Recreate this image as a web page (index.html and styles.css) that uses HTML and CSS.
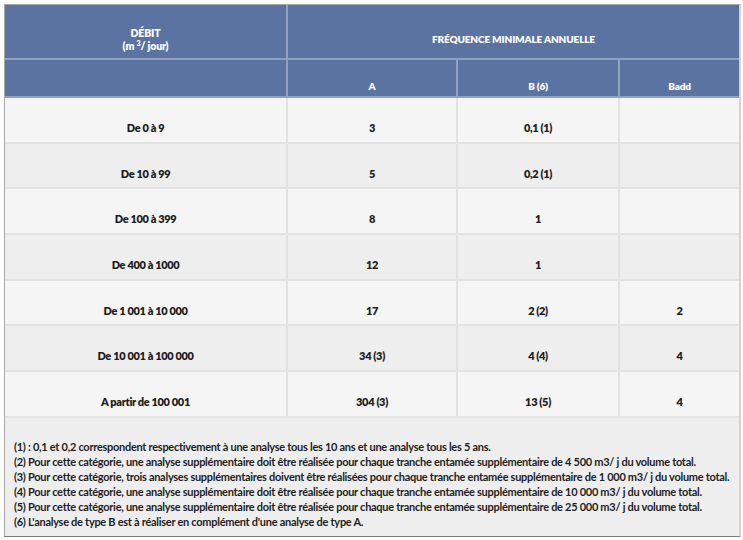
FILE: index.html
```html
<!DOCTYPE html>
<html lang="fr">
<head>
<meta charset="utf-8">
<link rel="stylesheet" href="styles.css">
</head>
<body>
<div class="frame">
  <table class="freq">
    <colgroup>
      <col class="c1"><col class="c2"><col class="c3"><col class="c4">
    </colgroup>
    <thead>
      <tr class="h1">
        <th class="debit">DÉBIT<br>(m <sup>3</sup>/ jour)</th>
        <th colspan="3">FRÉQUENCE MINIMALE ANNUELLE</th>
      </tr>
      <tr class="h2">
        <th></th>
        <th>A</th>
        <th>B (6)</th>
        <th>Badd</th>
      </tr>
    </thead>
    <tbody>
      <tr><td>De 0 à 9</td><td>3</td><td>0,1 (1)</td><td></td></tr>
      <tr><td>De 10 à 99</td><td>5</td><td>0,2 (1)</td><td></td></tr>
      <tr><td>De 100 à 399</td><td>8</td><td>1</td><td></td></tr>
      <tr><td>De 400 à 1000</td><td>12</td><td>1</td><td></td></tr>
      <tr><td>De 1 001 à 10 000</td><td>17</td><td>2 (2)</td><td>2</td></tr>
      <tr><td>De 10 001 à 100 000</td><td>34 (3)</td><td>4 (4)</td><td>4</td></tr>
      <tr><td>A partir de 100 001</td><td>304 (3)</td><td>13 (5)</td><td>4</td></tr>
    </tbody>
  </table>
  <div class="notes">
    <p>(1) : 0,1 et 0,2 correspondent respectivement à une analyse tous les 10 ans et une analyse tous les 5 ans.</p>
    <p>(2) Pour cette catégorie, une analyse supplémentaire doit être réalisée pour chaque tranche entamée supplémentaire de 4 500 m3/ j du volume total.</p>
    <p>(3) Pour cette catégorie, trois analyses supplémentaires doivent être réalisées pour chaque tranche entamée supplémentaire de 1 000 m3/ j du volume total.</p>
    <p>(4) Pour cette catégorie, une analyse supplémentaire doit être réalisée pour chaque tranche entamée supplémentaire de 10 000 m3/ j du volume total.</p>
    <p>(5) Pour cette catégorie, une analyse supplémentaire doit être réalisée pour chaque tranche entamée supplémentaire de 25 000 m3/ j du volume total.</p>
    <p>(6) L'analyse de type B est à réaliser en complément d'une analyse de type A.</p>
  </div>
</div>
</body>
</html>
```
FILE: styles.css
```css
html, body {
  margin: 0;
  padding: 0;
  background: #ffffff;
}
body {
  padding: 4px 3px 0 4px;
  font-family: "Lato", "Liberation Sans", sans-serif;
  color: #1e1e1e;
}
.frame {
  width: 734px;
  border-top: 1px solid #a8a8a8;
  border-left: 1px solid #a8a8a8;
  border-right: 2px solid #d4d4d4;
  border-bottom: 1px solid #7a7a7a;
  background: #eeeeee;
}
.freq {
  width: 100%;
  border-collapse: collapse;
  table-layout: fixed;
}
.c1 { width: 282px; }
.c2 { width: 170px; }
.c3 { width: 162px; }
.c4 { width: auto; }
.freq th {
  background: #5b73a0;
  color: #ffffff;
  font-size: 10px;
  font-weight: 800;
  letter-spacing: -0.15px;
  border: 2px solid #8fa2c3;
  padding: 16px 6px 0;
  text-align: center;
  vertical-align: middle;
  line-height: 13px;
}
.freq .debit { font-size: 10.5px; }
.freq thead tr:first-child th { border-top: none; }
.freq tr th:first-child, .freq tr td:first-child { border-left: none; }
.freq tr th:last-child, .freq tr td:last-child { border-right: none; }
.freq .h1 { height: 54px; }
.freq .h2 { height: 38px; }
.freq sup { font-size: 7px; vertical-align: 4px; line-height: 0; }
.freq td {
  font-size: 11px;
  font-weight: 800;
  letter-spacing: -0.35px;
  text-align: center;
  vertical-align: middle;
  padding: 16px 6px 0;
  border: 2px solid #e2e2e2;
  background: #f5f5f5;
  line-height: 14px;
}
.freq tbody tr { height: 45.7px; }
.freq tbody tr:nth-child(even) td { background: #eeeeee; }
.notes {
  padding: 21px 9px 7px;
  font-size: 11px;
  font-weight: 700;
  letter-spacing: -0.28px;
  line-height: 15px;
  white-space: nowrap;
}
.notes p { margin: 0; }
```
